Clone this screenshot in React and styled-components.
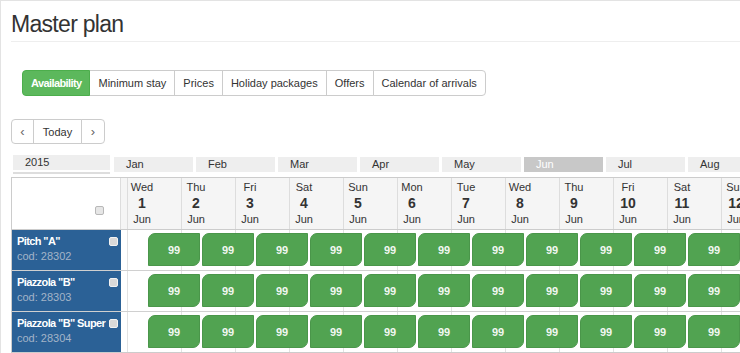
import React from "react";
import styled, { createGlobalStyle } from "styled-components";

const GlobalStyle = createGlobalStyle`
  html, body {
    margin: 0;
    padding: 0;
    background: #fff;
  }
  body {
    font-family: "Liberation Sans", Arial, sans-serif;
    font-size: 11px;
    color: #333;
    overflow: hidden;
  }
`;

const Page = styled.div`
  width: 740px;
  height: 353px;
  box-sizing: border-box;
  border-top: 1px solid #e3e3e3;
  border-left: 1px solid #e3e3e3;
  padding-left: 10px;
  overflow: hidden;
`;

const Title = styled.h1`
  margin: 10px 0 0;
  font-size: 23px;
  line-height: 26px;
  font-weight: 400;
  letter-spacing: -0.7px;
  color: #333;
`;

const Divider = styled.div`
  height: 1px;
  margin-top: 4px;
  background: #eee;
`;

const Tabs = styled.div`
  display: flex;
  margin: 28px 0 0 11px;
`;

const Tab = styled.div`
  height: 26px;
  box-sizing: border-box;
  display: flex;
  align-items: center;
  padding: 0 8px;
  margin-left: -1px;
  border: 1px solid ${(p) => (p.$active ? "#4cae4c" : "#ccc")};
  background: ${(p) => (p.$active ? "#5cb85c" : "#fff")};
  color: ${(p) => (p.$active ? "#fff" : "#333")};
  font-weight: ${(p) => (p.$active ? 700 : 400)};
  letter-spacing: ${(p) => (p.$active ? "-0.6px" : "0")};
  position: relative;
  z-index: ${(p) => (p.$active ? 1 : 0)};

  &:first-child {
    margin-left: 0;
    border-radius: 4px 0 0 4px;
  }
  &:last-child {
    border-radius: 0 4px 4px 0;
  }
`;

const NavGroup = styled.div`
  display: flex;
  margin-top: 23px;
`;

const NavBtn = styled.div`
  height: 25px;
  box-sizing: border-box;
  display: flex;
  align-items: center;
  justify-content: center;
  width: ${(p) => p.$w}px;
  margin-left: -1px;
  border: 1px solid #ccc;
  background: #fff;
  font-size: ${(p) => (p.$arrow ? "13px" : "11px")};
  color: ${(p) => (p.$arrow ? "#666" : "#333")};

  &:first-child {
    margin-left: 0;
    border-radius: 4px 0 0 4px;
  }
  &:last-child {
    border-radius: 0 4px 4px 0;
  }
`;

const Timeline = styled.div`
  display: flex;
  align-items: flex-start;
  margin: 11px 0 0 2px;
  white-space: nowrap;
`;

const YearCell = styled.div`
  width: 97px;
  display: flex;
  flex-direction: column;
  gap: 2px;
  margin-right: 4px;
  flex: none;
`;

const YearLabel = styled.div`
  height: 15px;
  line-height: 15px;
  padding-left: 12px;
  background: #eee;
`;

const YearBar = styled.div`
  height: 2px;
  background: #ddd;
`;

const Month = styled.div`
  flex: none;
  width: 79px;
  height: 15px;
  line-height: 15px;
  margin: 2px 3px 0 0;
  box-sizing: border-box;
  padding-left: 12px;
  background: ${(p) => (p.$current ? "#c8c8c8" : "#eee")};
  color: ${(p) => (p.$current ? "#fff" : "#333")};
`;

const Table = styled.div`
  margin-top: 3px;
  width: max-content;
  border: 1px solid #ccc;
`;

const HeaderRow = styled.div`
  display: flex;
  height: 52px;
  box-sizing: border-box;
  border-bottom: 1px solid #ccc;
`;

const CornerCell = styled.div`
  width: 109px;
  box-sizing: border-box;
  border-right: 1px solid #ddd;
  display: flex;
  justify-content: flex-end;
  align-items: flex-end;
  padding: 0 16px 14px 0;
`;

const Spacer = styled.div`
  width: 6px;
  flex: none;
  background: ${(p) => (p.$head ? "#f5f5f5" : "#fff")};
`;

const DayHead = styled.div`
  width: 54px;
  flex: none;
  box-sizing: border-box;
  border-left: 1px solid #ddd;
  background: #f5f5f5;
  padding: 3px 0 0 2px;
`;

const DayInner = styled.div`
  display: inline-flex;
  flex-direction: column;
  align-items: center;
  min-width: 24px;
`;

const DayName = styled.div`
  font-size: 11px;
  line-height: 13px;
`;

const DayNum = styled.div`
  font-size: 14px;
  line-height: 18px;
  font-weight: 700;
`;

const DayMonth = styled.div`
  font-size: 11px;
  line-height: 13px;
  margin-top: 1px;
`;

const Check = styled.span`
  display: block;
  flex: none;
  width: 9px;
  height: 9px;
  box-sizing: border-box;
  border-radius: 2px;
  background: ${(p) => (p.$light ? "#d9d9d9" : "#e6e6e6")};
  border: 1px solid ${(p) => (p.$light ? "#f2f2f2" : "#b8b8b8")};
`;

const Row = styled.div`
  display: flex;
  height: 41px;
  box-sizing: border-box;
  border-bottom: 1px solid #d0d0d0;

  &:last-child {
    border-bottom: none;
    height: 40px;
  }
`;

const LabelCell = styled.div`
  width: 109px;
  flex: none;
  box-sizing: border-box;
  display: flex;
  padding: 4px 3px 0 5px;
  background: #2b6196;
`;

const LabelText = styled.div`
  flex: 1;
  line-height: 15px;
  white-space: nowrap;
`;

const PitchName = styled.div`
  color: #fff;
  font-weight: 700;
  letter-spacing: -0.6px;
`;

const PitchCode = styled.div`
  color: #a3b4c8;
`;

const LabelCheck = styled.div`
  margin-top: 3px;
`;

const Track = styled.div`
  display: flex;
  gap: 2px;
  padding: 3px 0 0 21px;
  background-image: repeating-linear-gradient(
    to right,
    #e2e2e2 0,
    #e2e2e2 1px,
    transparent 1px,
    transparent 54px
  );
`;

const Block = styled.div`
  width: 52px;
  height: 33px;
  flex: none;
  box-sizing: border-box;
  display: flex;
  align-items: center;
  justify-content: center;
  background: #51a351;
  border: 1px solid #4a964a;
  border-radius: 7px 0 7px 0;
  color: #f2f7f2;
  font-weight: 700;
`;

const tabs = [
  "Availability",
  "Minimum stay",
  "Prices",
  "Holiday packages",
  "Offers",
  "Calendar of arrivals",
];

const months = ["Jan", "Feb", "Mar", "Apr", "May", "Jun", "Jul", "Aug", "Sep"];
const weekdays = ["Wed", "Thu", "Fri", "Sat", "Sun", "Mon", "Tue"];
const days = Array.from({ length: 13 }, (_, i) => ({
  name: weekdays[i % 7],
  num: i + 1,
}));

const pitches = [
  { name: 'Pitch "A"', code: "28302" },
  { name: 'Piazzola "B"', code: "28303" },
  { name: 'Piazzola "B" Super', code: "28304" },
];

const App = () => {
  return (
    <>
      <GlobalStyle />
      <Page>
        <Title>Master plan</Title>
        <Divider />

        <Tabs>
          {tabs.map((t, i) => (
            <Tab key={t} $active={i === 0}>
              {t}
            </Tab>
          ))}
        </Tabs>

        <NavGroup>
          <NavBtn $w={23} $arrow>‹</NavBtn>
          <NavBtn $w={49}>Today</NavBtn>
          <NavBtn $w={24} $arrow>›</NavBtn>
        </NavGroup>

        <Timeline>
          <YearCell>
            <YearLabel>2015</YearLabel>
            <YearBar />
          </YearCell>
          {months.map((m) => (
            <Month key={m} $current={m === "Jun"}>
              {m}
            </Month>
          ))}
        </Timeline>

        <Table>
          <HeaderRow>
            <CornerCell>
              <Check />
            </CornerCell>
            <Spacer $head />
            {days.map((d) => (
              <DayHead key={d.num}>
                <DayInner>
                  <DayName>{d.name}</DayName>
                  <DayNum>{d.num}</DayNum>
                  <DayMonth>Jun</DayMonth>
                </DayInner>
              </DayHead>
            ))}
          </HeaderRow>

          {pitches.map((p) => (
            <Row key={p.code}>
              <LabelCell>
                <LabelText>
                  <PitchName>{p.name}</PitchName>
                  <PitchCode>cod: {p.code}</PitchCode>
                </LabelText>
                <LabelCheck>
                  <Check $light />
                </LabelCheck>
              </LabelCell>
              <Spacer />
              <Track>
                {days.map((d) => (
                  <Block key={d.num}>99</Block>
                ))}
              </Track>
            </Row>
          ))}
        </Table>
      </Page>
    </>
  );
};

export default App;
